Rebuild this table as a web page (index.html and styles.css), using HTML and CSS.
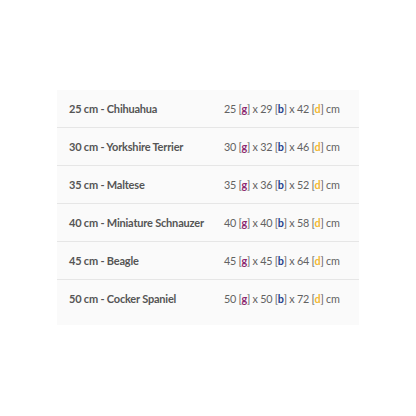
FILE: index.html
```html
<!DOCTYPE html>
<html>
<head>
<meta charset="utf-8">
<link rel="stylesheet" href="styles.css">
</head>
<body>
<div class="table">
  <div class="row"><div class="name">25 cm - Chihuahua</div><div class="dims">25 [<span class="g">g</span>] x 29 [<span class="b">b</span>] x 42 [<span class="d">d</span>] cm</div></div>
  <div class="row"><div class="name">30 cm - Yorkshire Terrier</div><div class="dims">30 [<span class="g">g</span>] x 32 [<span class="b">b</span>] x 46 [<span class="d">d</span>] cm</div></div>
  <div class="row"><div class="name">35 cm - Maltese</div><div class="dims">35 [<span class="g">g</span>] x 36 [<span class="b">b</span>] x 52 [<span class="d">d</span>] cm</div></div>
  <div class="row"><div class="name">40 cm - Miniature Schnauzer</div><div class="dims">40 [<span class="g">g</span>] x 40 [<span class="b">b</span>] x 58 [<span class="d">d</span>] cm</div></div>
  <div class="row"><div class="name">45 cm - Beagle</div><div class="dims">45 [<span class="g">g</span>] x 45 [<span class="b">b</span>] x 64 [<span class="d">d</span>] cm</div></div>
  <div class="row"><div class="name">50 cm - Cocker Spaniel</div><div class="dims">50 [<span class="g">g</span>] x 50 [<span class="b">b</span>] x 72 [<span class="d">d</span>] cm</div></div>
</div>
</body>
</html>
```
FILE: styles.css
```css
html, body {
  margin: 0;
  padding: 0;
  background: #ffffff;
}
body {
  padding: 90px 0 0 57px;
  font-family: Lato, "Open Sans", sans-serif;
  color: #555555;
}
.table {
  width: 302px;
  background: #fafafa;
  padding-bottom: 8px;
}
.row {
  display: flex;
  align-items: center;
  height: 37px;
  border-bottom: 1px solid #e6e6e6;
}
.row:last-child {
  border-bottom: none;
}
.name {
  width: 155px;
  padding-left: 12px;
  font-size: 11px;
  letter-spacing: -0.2px;
  font-weight: bold;
}
.dims {
  font-size: 10.8px;
  letter-spacing: -0.25px;
  font-weight: normal;
  color: #626262;
}
.g { color: #8e2870; font-weight: bold; }
.b { color: #1f3f8f; font-weight: bold; }
.d { color: #f2b832; font-weight: bold; }
```
